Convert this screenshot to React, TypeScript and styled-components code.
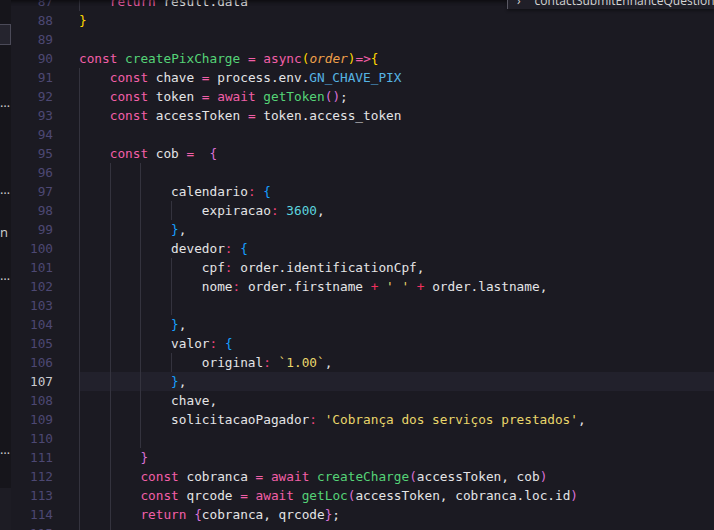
import React from 'react';
import styled, { createGlobalStyle } from 'styled-components';

type Kind = 'kw' | 'fn' | 'id' | 'op' | 'colon' | 'plus' | 'b1' | 'b2' | 'b3' | 'cst' | 'num' | 'str' | 'param';
type Tok = [string, Kind];

interface CodeLine {
  n: number;
  indents: number;
  tokens: Tok[];
}

const colors: Record<Kind, string> = {
  kw: '#f25fa8',
  fn: '#55d377',
  id: '#e4e4e6',
  op: '#f25fa8',
  colon: '#f0457c',
  plus: '#f2305e',
  b1: '#ffd700',
  b2: '#da70d6',
  b3: '#179fff',
  cst: '#56b4e4',
  num: '#5cd3df',
  str: '#e9d66b',
  param: '#f0a04a',
};

const GlobalStyle = createGlobalStyle`
  html, body {
    margin: 0;
    padding: 0;
    height: 100%;
    background: #1b1a22;
    overflow: hidden;
  }
  #root {
    height: 100%;
  }
`;

const Window = styled.div`
  display: flex;
  height: 530px;
  width: 714px;
  background: #1b1a22;
  overflow: hidden;
`;

const Sidebar = styled.div`
  width: 11px;
  flex-shrink: 0;
  display: flex;
  flex-direction: column;
  background: #16151b;
  font-family: 'Open Sans', 'DejaVu Sans', sans-serif;
  font-size: 13px;
  color: #cfcfcf;
  overflow: hidden;
`;

const SideItem = styled.div<{ $top: number; $selected?: boolean }>`
  height: 21px;
  margin-top: ${p => p.$top}px;
  line-height: 19px;
  box-sizing: border-box;
  white-space: nowrap;
  text-align: right;
  padding-right: 3px;
  ${p => p.$selected && `
    background: #25242e;
    border: 1px solid #4b4a58;
    border-left: none;
  `}
`;

const SideFooter = styled.div`
  margin-top: auto;
  height: 42px;
  background: #1d1c24;
`;

const Editor = styled.div`
  position: relative;
  flex: 1;
  overflow: hidden;
  font-family: 'DejaVu Sans Mono', 'Liberation Mono', monospace;
  font-size: 12.75px;
`;

const Lines = styled.div`
  margin-top: -8px;
`;

const Row = styled.div`
  display: flex;
  height: 19px;
  line-height: 19px;
`;

const LineNo = styled.div<{ $active: boolean }>`
  width: 68px;
  flex-shrink: 0;
  box-sizing: border-box;
  padding-right: 26px;
  text-align: right;
  color: ${p => (p.$active ? '#c9c9cf' : '#4d4873')};
`;

const Code = styled.div<{ $active: boolean }>`
  flex: 1;
  display: flex;
  white-space: pre;
  background: ${p => (p.$active ? '#22212c' : 'transparent')};
`;

const Indent = styled.div`
  width: 4ch;
  flex-shrink: 0;
  box-shadow: inset 1px 0 0 #34333e;
`;

const Token = styled.span<{ $kind: Kind }>`
  color: ${p => colors[p.$kind]};
  font-style: ${p => (p.$kind === 'param' ? 'italic' : 'normal')};
`;

const TopShadow = styled.div`
  position: absolute;
  top: 0;
  left: 0;
  right: 0;
  height: 6px;
  box-shadow: inset 0 6px 6px -6px #000;
  pointer-events: none;
`;

const StickyWidget = styled.div`
  position: absolute;
  top: 0;
  right: 0;
  width: 207px;
  height: 9px;
  overflow: hidden;
  display: flex;
  align-items: flex-end;
  gap: 14px;
  padding-left: 9px;
  box-sizing: border-box;
  background: #201f28;
  border-left: 1px solid #5a5964;
  box-shadow: 0 2px 3px rgba(0, 0, 0, 0.35);
  font-family: 'Open Sans', 'DejaVu Sans', sans-serif;
  font-size: 12px;
  line-height: 12px;
  color: #d4d4d4;
  white-space: nowrap;
`;

const WidgetText = styled.span`
  margin-bottom: 2px;
`;

const lines: CodeLine[] = [
  { n: 87, indents: 1, tokens: [['return', 'kw'], [' result.data', 'id']] },
  { n: 88, indents: 0, tokens: [['}', 'b1']] },
  { n: 89, indents: 0, tokens: [] },
  {
    n: 90,
    indents: 0,
    tokens: [
      ['const', 'kw'], [' ', 'id'], ['createPixCharge', 'fn'], [' ', 'id'], ['=', 'op'], [' ', 'id'],
      ['async', 'kw'], ['(', 'b1'], ['order', 'param'], [')', 'b1'], ['=>', 'op'], ['{', 'b1'],
    ],
  },
  {
    n: 91,
    indents: 1,
    tokens: [['const', 'kw'], [' chave ', 'id'], ['=', 'op'], [' process.env.', 'id'], ['GN_CHAVE_PIX', 'cst']],
  },
  {
    n: 92,
    indents: 1,
    tokens: [
      ['const', 'kw'], [' token ', 'id'], ['=', 'op'], [' ', 'id'], ['await', 'kw'], [' ', 'id'],
      ['getToken', 'fn'], ['()', 'b2'], [';', 'id'],
    ],
  },
  {
    n: 93,
    indents: 1,
    tokens: [['const', 'kw'], [' accessToken ', 'id'], ['=', 'op'], [' token.access_token', 'id']],
  },
  { n: 94, indents: 1, tokens: [] },
  { n: 95, indents: 1, tokens: [['const', 'kw'], [' cob ', 'id'], ['=', 'op'], ['  ', 'id'], ['{', 'b2']] },
  { n: 96, indents: 3, tokens: [] },
  { n: 97, indents: 3, tokens: [['calendario', 'id'], [':', 'colon'], [' ', 'id'], ['{', 'b3']] },
  { n: 98, indents: 4, tokens: [['expiracao', 'id'], [':', 'colon'], [' ', 'id'], ['3600', 'num'], [',', 'id']] },
  { n: 99, indents: 3, tokens: [['}', 'b3'], [',', 'id']] },
  { n: 100, indents: 3, tokens: [['devedor', 'id'], [':', 'colon'], [' ', 'id'], ['{', 'b3']] },
  { n: 101, indents: 4, tokens: [['cpf', 'id'], [':', 'colon'], [' order.identificationCpf,', 'id']] },
  {
    n: 102,
    indents: 4,
    tokens: [
      ['nome', 'id'], [':', 'colon'], [' order.firstname ', 'id'], ['+', 'plus'], [' ', 'id'],
      ["' '", 'str'], [' ', 'id'], ['+', 'plus'], [' order.lastname,', 'id'],
    ],
  },
  { n: 103, indents: 4, tokens: [] },
  { n: 104, indents: 3, tokens: [['}', 'b3'], [',', 'id']] },
  { n: 105, indents: 3, tokens: [['valor', 'id'], [':', 'colon'], [' ', 'id'], ['{', 'b3']] },
  { n: 106, indents: 4, tokens: [['original', 'id'], [':', 'colon'], [' ', 'id'], ['`1.00`', 'str'], [',', 'id']] },
  { n: 107, indents: 3, tokens: [['}', 'b3'], [',', 'id']] },
  { n: 108, indents: 3, tokens: [['chave,', 'id']] },
  {
    n: 109,
    indents: 3,
    tokens: [['solicitacaoPagador', 'id'], [':', 'colon'], [' ', 'id'], ["'Cobrança dos serviços prestados'", 'str'], [',', 'id']],
  },
  { n: 110, indents: 3, tokens: [] },
  { n: 111, indents: 2, tokens: [['}', 'b2']] },
  {
    n: 112,
    indents: 2,
    tokens: [
      ['const', 'kw'], [' cobranca ', 'id'], ['=', 'op'], [' ', 'id'], ['await', 'kw'], [' ', 'id'],
      ['createCharge', 'fn'], ['(', 'b2'], ['accessToken, cob', 'id'], [')', 'b2'],
    ],
  },
  {
    n: 113,
    indents: 2,
    tokens: [
      ['const', 'kw'], [' qrcode ', 'id'], ['=', 'op'], [' ', 'id'], ['await', 'kw'], [' ', 'id'],
      ['getLoc', 'fn'], ['(', 'b2'], ['accessToken, cobranca.loc.id', 'id'], [')', 'b2'],
    ],
  },
  {
    n: 114,
    indents: 2,
    tokens: [['return', 'kw'], [' ', 'id'], ['{', 'b2'], ['cobranca, qrcode', 'id'], ['}', 'b2'], [';', 'id']],
  },
  { n: 115, indents: 2, tokens: [] },
];

const ACTIVE_LINE = 107;

const App: React.FC = () => {
  return (
    <>
      <GlobalStyle />
      <Window>
        <Sidebar>
          <SideItem $top={24} $selected />
          <SideItem $top={48}>…</SideItem>
          <SideItem $top={66}>…</SideItem>
          <SideItem $top={22}>n</SideItem>
          <SideItem $top={22}>…</SideItem>
          <SideItem $top={153}>…</SideItem>
          <SideFooter />
        </Sidebar>
        <Editor>
          <Lines>
            {lines.map(line => {
              const active = line.n === ACTIVE_LINE;
              return (
                <Row key={line.n}>
                  <LineNo $active={active}>{line.n}</LineNo>
                  <Code $active={active}>
                    {Array.from({ length: line.indents }).map((_, i) => (
                      <Indent key={i} />
                    ))}
                    <span>
                      {line.tokens.map(([text, kind], i) => (
                        <Token key={i} $kind={kind}>
                          {text}
                        </Token>
                      ))}
                    </span>
                  </Code>
                </Row>
              );
            })}
          </Lines>
          <TopShadow />
          <StickyWidget>
            <WidgetText>›</WidgetText>
            <WidgetText>contactSubmitEnhanceQuestions = [</WidgetText>
          </StickyWidget>
        </Editor>
      </Window>
    </>
  );
};

export default App;
